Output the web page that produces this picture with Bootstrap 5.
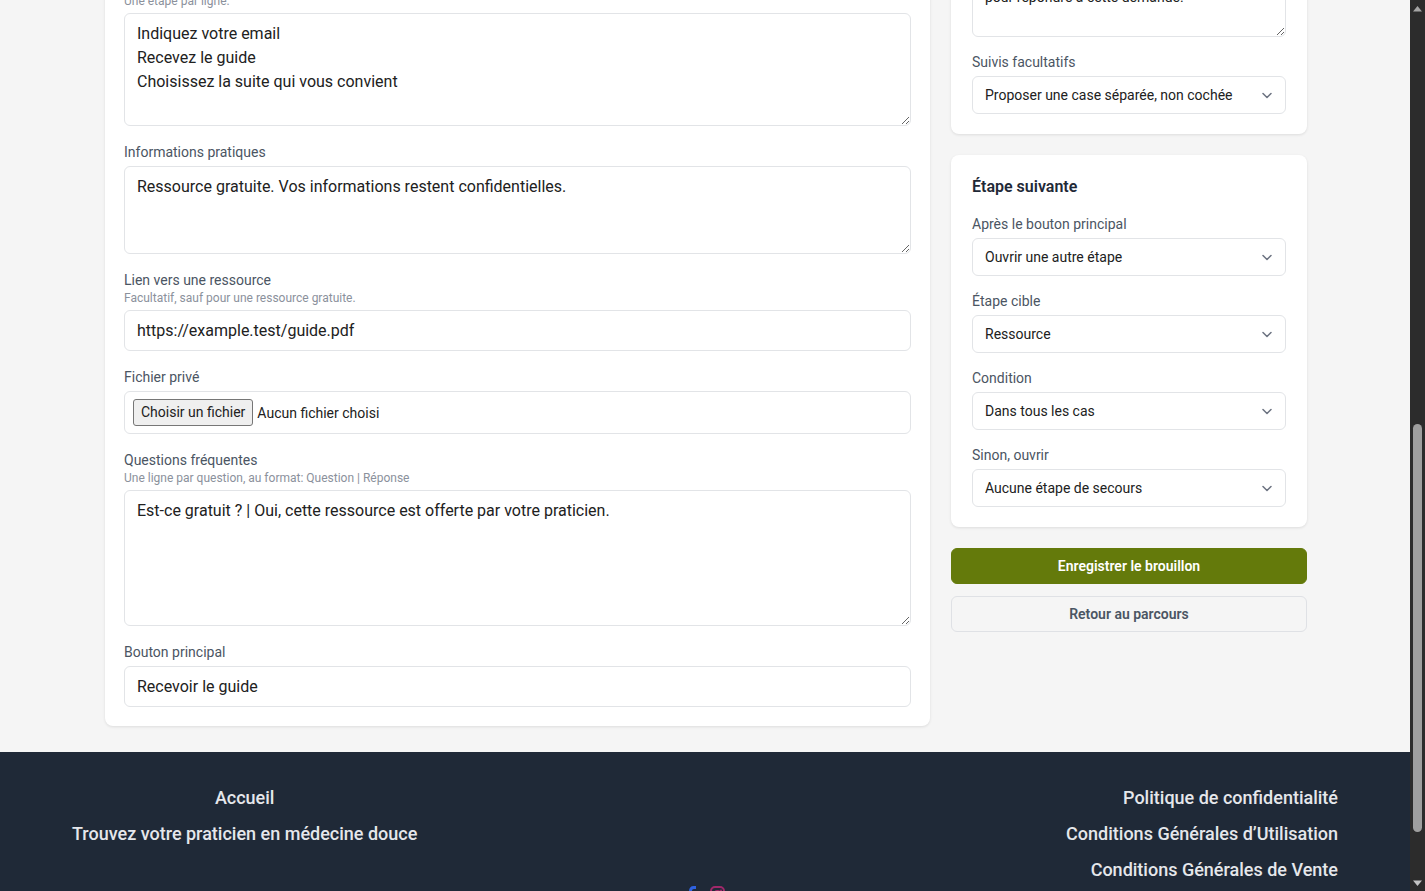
<!DOCTYPE html>
<html lang="fr">
<head>
<meta charset="utf-8">
<meta name="viewport" content="width=device-width, initial-scale=1">
<title>Étape du parcours</title>
<link rel="stylesheet" href="https://cdn.jsdelivr.net/npm/bootstrap@5.3.0/dist/css/bootstrap.min.css">
<style>
  body { font-family: Roboto, "Liberation Sans", sans-serif; background: #f5f5f5; color: #1f2937; }
  .page-view { min-width: 0; }
  .page-main { padding-left: 2px; }
  .editor { max-width: 1202px; display: grid; grid-template-columns: minmax(0, 1fr) 356px; gap: 21px; padding-bottom: 26px; }
  .panel { background: #fff; border-radius: 8px; padding: 20px 21px; box-shadow: 0 1px 3px rgba(0,0,0,.1); }
  /* the page is scrolled: the first panels start above the window */
  .panel-main { margin-top: -27px; padding: 20px 19px 19px; }
  .panel-side { margin-top: -42px; }
  .panel-next { margin-top: 21px; }
  .field + .field { margin-top: 16px; }
  .panel-narrow .field + .field, .panel-narrow .panel-title + .field { margin-top: 15px; }
  .field-label { display: block; font-size: 14px; line-height: 20px; color: #4b5563; margin-bottom: 4px; }
  .field-hint { font-size: 12px; line-height: 16px; color: #8b919c; margin-bottom: 4px; }
  .field-label.has-hint { margin-bottom: 0; }
  .panel-title { font-size: 16px; line-height: 24px; font-weight: 600; color: #1f2937; }
  .form-control, .form-select { border: 1px solid #e2e4e7; border-radius: 6px; color: #212121; background-color: #fff; }
  .form-control { font-size: 16px; line-height: 24px; padding: 8px 12px; box-shadow: none; }
  textarea.form-control { resize: vertical; overflow: hidden; }
  input.form-control { height: 41px; }
  .area-steps { height: 113px; }
  .area-info { height: 88px; }
  .area-faq { height: 136px; }
  .area-consent.form-control { height: 59px; font-size: 14px; line-height: 20px; padding: 8px 12px; }
  .form-select { height: 38px; font-size: 14px; line-height: 20px; padding: 8px 36px 8px 12px; background-position: right 10px center; background-size: 16px;
    background-image: url("data:image/svg+xml,%3csvg xmlns='http://www.w3.org/2000/svg' viewBox='0 0 16 16'%3e%3cpath fill='none' stroke='%236b7280' stroke-width='1.5' stroke-linecap='round' stroke-linejoin='round' d='M4 6.5l4 4 4-4'/%3e%3c/svg%3e"); }
  .file-box { height: 43px; border: 1px solid #e2e4e7; border-radius: 6px; padding: 0 8px; font-size: 14px; line-height: 20px; color: #212121; }
  .file-pick { border: 1px solid #767676; border-radius: 3px; background: #efefef; padding: 2px 7px 3px; cursor: pointer; }
  .actions { margin-top: 21px; gap: 12px; }
  .action { border-radius: 6px; font-size: 14px; line-height: 20px; font-weight: 600; padding: 7px 16px; }
  .action-save, .action-save:hover { background: #647a0b; border-color: #647a0b; color: #fff; }
  .action-back, .action-back:hover { background: #f5f5f5; border-color: #dfe1e5; color: #4b5563; }
  .site-footer { background: #1f2937; padding: 34px 72px 16px; font-size: 18px; line-height: 24px; }
  .site-footer a { color: #e5e7eb; text-decoration: none; font-weight: 500; }
  .link-stack { gap: 12px; }
  .scroll-track { width: 15px; background: #2c2c2c; padding: 6px 3px 5px; }
  .scroll-thumb { width: 9px; flex: 408 0 0; background: #9f9f9f; border-radius: 5px; }
  .scroll-space-top { flex: 412 0 0; }
  .scroll-space-bottom { flex: 48 0 0; }
</style>
</head>
<body>
<div class="d-flex vh-100 overflow-hidden">
  <div class="page-view flex-grow-1 overflow-hidden">
    <main class="page-main">
      <form class="editor mx-auto">
        <section class="panel panel-main">
          <div class="field">
            <div class="field-hint" id="hint-steps">Une étape par ligne.</div>
            <textarea class="form-control area-steps" aria-label="Étapes" aria-describedby="hint-steps" spellcheck="false">Indiquez votre email
Recevez le guide
Choisissez la suite qui vous convient</textarea>
          </div>
          <div class="field">
            <label class="field-label" for="info">Informations pratiques</label>
            <textarea class="form-control area-info" id="info" spellcheck="false">Ressource gratuite. Vos informations restent confidentielles.</textarea>
          </div>
          <div class="field">
            <label class="field-label has-hint" for="url">Lien vers une ressource</label>
            <div class="field-hint">Facultatif, sauf pour une ressource gratuite.</div>
            <input class="form-control" id="url" type="url" value="https://example.test/guide.pdf">
          </div>
          <div class="field">
            <label class="field-label" for="file">Fichier privé</label>
            <div class="file-box d-flex align-items-center gap-1 position-relative">
              <input class="visually-hidden" id="file" type="file">
              <label class="file-pick" for="file">Choisir un fichier</label>
              <span>Aucun fichier choisi</span>
            </div>
          </div>
          <div class="field">
            <label class="field-label has-hint" for="faq">Questions fréquentes</label>
            <div class="field-hint">Une ligne par question, au format: Question | Réponse</div>
            <textarea class="form-control area-faq" id="faq" spellcheck="false">Est-ce gratuit ? | Oui, cette ressource est offerte par votre praticien.</textarea>
          </div>
          <div class="field">
            <label class="field-label" for="cta">Bouton principal</label>
            <input class="form-control" id="cta" type="text" value="Recevoir le guide">
          </div>
        </section>

        <div class="d-flex flex-column">
          <section class="panel panel-side panel-narrow">
            <div class="field">
              <textarea class="form-control area-consent" aria-label="Consentement" spellcheck="false">pour répondre à cette demande.</textarea>
            </div>
            <div class="field">
              <label class="field-label" for="followup">Suivis facultatifs</label>
              <select class="form-select" id="followup"><option>Proposer une case séparée, non cochée</option></select>
            </div>
          </section>
          <section class="panel panel-narrow panel-next">
            <h2 class="panel-title mb-0">Étape suivante</h2>
            <div class="field">
              <label class="field-label" for="after">Après le bouton principal</label>
              <select class="form-select" id="after"><option>Ouvrir une autre étape</option></select>
            </div>
            <div class="field">
              <label class="field-label" for="target">Étape cible</label>
              <select class="form-select" id="target"><option>Ressource</option></select>
            </div>
            <div class="field">
              <label class="field-label" for="condition">Condition</label>
              <select class="form-select" id="condition"><option>Dans tous les cas</option></select>
            </div>
            <div class="field">
              <label class="field-label" for="fallback">Sinon, ouvrir</label>
              <select class="form-select" id="fallback"><option>Aucune étape de secours</option></select>
            </div>
          </section>
          <div class="actions d-grid">
            <button type="submit" class="btn action action-save">Enregistrer le brouillon</button>
            <a href="#" class="btn action action-back">Retour au parcours</a>
          </div>
        </div>
      </form>
    </main>
    <footer class="site-footer">
      <div class="d-flex justify-content-between align-items-start">
        <nav class="link-stack d-flex flex-column text-center" aria-label="Navigation">
          <a href="#">Accueil</a>
          <a href="#">Trouvez votre praticien en médecine douce</a>
        </nav>
        <nav class="link-stack d-flex flex-column text-end" aria-label="Informations légales">
          <a href="#">Politique de confidentialité</a>
          <a href="#">Conditions Générales d’Utilisation</a>
          <a href="#">Conditions Générales de Vente</a>
        </nav>
      </div>
      <div class="d-flex justify-content-center gap-2 pt-1">
        <a href="#" class="d-flex" aria-label="Facebook"><svg width="18" height="18" viewBox="0 0 18 18" fill="#2f62e0"><path d="M6 18v-8H3V7h3V5c0-3 1.800-5 4.500-5H13v3h-2c-1.300 0-2 .7-2 2v2h4l-.5 3H9v8z"/></svg></a>
        <a href="#" class="d-flex" aria-label="Instagram"><svg width="18" height="18" viewBox="0 0 18 18" fill="none" stroke="#a0286a" stroke-width="2"><rect x="2" y="1" width="13" height="14" rx="4"/><circle cx="8.500" cy="8" r="3"/><circle cx="12" cy="4.500" r="1" fill="#a0286a" stroke="none"/></svg></a>
      </div>
    </footer>
  </div>
  <div class="scroll-track d-flex flex-column align-items-center" aria-hidden="true">
    <svg width="9" height="6" viewBox="0 0 9 6"><path d="M0 5.500L4.500 0 9 5.500z" fill="#a6a6a6"/></svg>
    <div class="scroll-space-top"></div>
    <div class="scroll-thumb"></div>
    <div class="scroll-space-bottom"></div>
    <svg width="9" height="6" viewBox="0 0 9 6"><path d="M0 .5L4.500 6 9 .5z" fill="#c4c4c4"/></svg>
  </div>
</div>
<script src="https://cdn.jsdelivr.net/npm/bootstrap@5.3.0/dist/js/bootstrap.bundle.min.js"></script>
</body>
</html>
